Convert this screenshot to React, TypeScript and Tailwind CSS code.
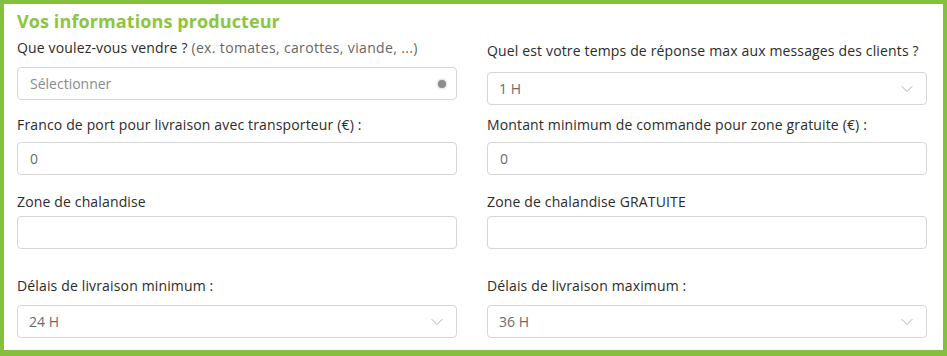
import { ChevronDown } from "lucide-react";

const font = { fontFamily: '"Open Sans", "Liberation Sans", sans-serif' };

function Label({ children }: { children: React.ReactNode }) {
  return (
    <div className="text-[14px] leading-[20px] tracking-[0.15px] text-[#2b2b2b]">{children}</div>
  );
}

function TextInput({ value, className = "" }: { value?: string; className?: string }) {
  return (
    <div
      className={`flex h-[33px] items-center rounded-[4px] border border-[#d6d6d6] bg-white pl-[12px] text-[14px] text-[#6b6b6b] ${className}`}
    >
      {value}
    </div>
  );
}

function Select({ value, className = "" }: { value: string; className?: string }) {
  return (
    <div
      className={`flex h-[33px] items-center justify-between rounded-[4px] border border-[#d6d6d6] bg-white pl-[11px] pr-[9px] text-[14px] text-[#6b6b6b] ${className}`}
    >
      <span>{value}</span>
      <ChevronDown className="h-[20px] w-[20px] text-[#aaaaaa]" strokeWidth={1.1} />
    </div>
  );
}

export default function App() {
  return (
    <div
      style={font}
      className="h-[356px] w-[947px] border-t-[4px] border-r-[4px] border-b-[6px] border-l-[4px] border-[#86bf3e] bg-white pl-[13px] pr-[16px]"
    >
      <div className="pt-[5px] text-[18px] font-bold leading-[24px] tracking-[0.1px] text-[#8cc63f]">
        Vos informations producteur
      </div>

      <div className="mt-[5px] grid grid-cols-2 items-start gap-x-[30px]">
        <div>
          <Label>
            Que voulez-vous vendre ?{" "}
            <span className="text-[14px] tracking-[0.35px] text-[#666]">
              (ex. tomates, carottes, viande, ...)
            </span>
          </Label>
          <div className="mt-[9px] flex h-[33px] items-center justify-between rounded-[4px] border border-[#d6d6d6] bg-white pl-[12px] pr-[10px] text-[14px] text-[#8a8a8a]">
            <span>Sélectionner</span>
            <span className="h-[8px] w-[8px] rounded-full bg-[#8c8c8c] shadow-[0_0_2px_1px_rgba(140,140,140,0.35)]" />
          </div>
        </div>
        <div className="pt-[3px]">
          <Label>Quel est votre temps de réponse max aux messages des clients ?</Label>
          <Select value="1 H" className="mt-[11px]" />
        </div>
      </div>

      <div className="mt-[10px] grid grid-cols-2 items-start gap-x-[30px]">
        <div>
          <Label>Franco de port pour livraison avec transporteur (€) :</Label>
          <TextInput value="0" className="mt-[7px]" />
        </div>
        <div>
          <Label>Montant minimum de commande pour zone gratuite (€) :</Label>
          <TextInput value="0" className="mt-[7px]" />
        </div>
      </div>

      <div className="mt-[17px] grid grid-cols-2 items-start gap-x-[30px]">
        <div>
          <Label>Zone de chalandise</Label>
          <TextInput className="mt-[4px]" />
        </div>
        <div>
          <Label>Zone de chalandise GRATUITE</Label>
          <TextInput className="mt-[4px]" />
        </div>
      </div>

      <div className="mt-[27px] grid grid-cols-2 items-start gap-x-[30px]">
        <div>
          <Label>Délais de livraison minimum :</Label>
          <Select value="24 H" className="mt-[9px]" />
        </div>
        <div>
          <Label>Délais de livraison maximum :</Label>
          <Select value="36 H" className="mt-[9px]" />
        </div>
      </div>
    </div>
  );
}
